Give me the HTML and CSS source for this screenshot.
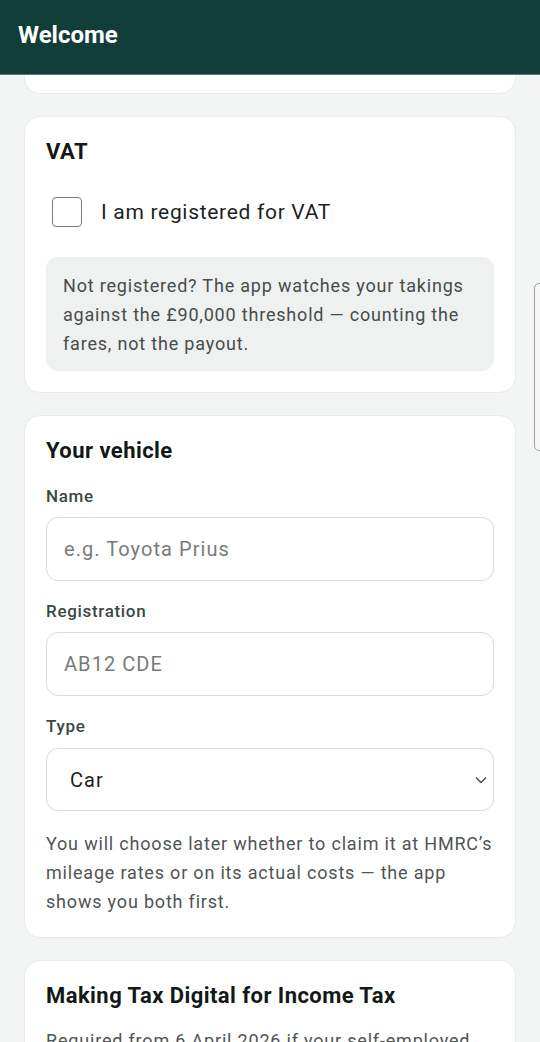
FILE: index.html
```html
<!DOCTYPE html>
<html lang="en">
<head>
<meta charset="utf-8">
<meta name="viewport" content="width=device-width, initial-scale=1">
<title>Welcome</title>
<link rel="stylesheet" href="styles.css">
</head>
<body>
<header class="topbar">
  <h1 class="topbar-title">Welcome</h1>
</header>
<main class="page">
  <section class="card card-intro" aria-hidden="true"></section>

  <section class="card">
    <h2 class="card-title">VAT</h2>
    <label class="check-row">
      <input type="checkbox" class="check-box">
      <span class="check-label">I am registered for VAT</span>
    </label>
    <div class="note">Not registered? The app watches your takings against the £90,000 threshold — counting the fares, not the payout.</div>
  </section>

  <section class="card">
    <h2 class="card-title">Your vehicle</h2>
    <div class="field">
      <label class="field-label" for="vname">Name</label>
      <input id="vname" class="text-input" type="text" placeholder="e.g. Toyota Prius">
    </div>
    <div class="field">
      <label class="field-label" for="vreg">Registration</label>
      <input id="vreg" class="text-input" type="text" placeholder="AB12 CDE">
    </div>
    <div class="field">
      <label class="field-label" for="vtype">Type</label>
      <div class="select-wrap">
        <select id="vtype" class="select-input">
          <option>Car</option>
          <option>Van</option>
          <option>Motorcycle</option>
        </select>
        <svg class="select-chevron" width="12" height="8" viewBox="0 0 12 8" aria-hidden="true"><path d="M1 1.5 L6 6.5 L11 1.5" fill="none" stroke="#444" stroke-width="1.3"/></svg>
      </div>
    </div>
    <p class="help">You will choose later whether to claim it at HMRC’s mileage rates or on its actual costs — the app shows you both first.</p>
  </section>

  <section class="card">
    <h2 class="card-title">Making Tax Digital for Income Tax</h2>
    <p class="help help-top">Required from 6 April 2026 if your self-employed income is over £50,000. The app keeps digital records and can send your quarterly updates.</p>
  </section>
</main>
<div class="edge-handle" aria-hidden="true"></div>
</body>
</html>
```
FILE: styles.css
```css
* { box-sizing: border-box; }

html, body {
  margin: 0;
  padding: 0;
}

body {
  background: #f3f5f4;
  font-family: Roboto, "Noto Sans", "Liberation Sans", sans-serif;
  color: #151b19;
}

.topbar {
  position: fixed;
  top: 0;
  left: 0;
  right: 0;
  height: 75px;
  background: #113e38;
  border-bottom: 1px solid #4f7f77;
  z-index: 10;
  display: flex;
  align-items: flex-start;
  padding: 19px 18px 0;
}

.topbar-title {
  margin: 0;
  font-size: 24px;
  line-height: 32px;
  font-weight: 700;
  color: #ffffff;
}

.page {
  padding: 0 24px 40px;
  display: flex;
  flex-direction: column;
  gap: 22px;
}

.card {
  background: #ffffff;
  border: 1px solid #e8ebea;
  border-radius: 16px;
  padding: 21px;
}

.card-intro {
  height: 94px;
  border-top-left-radius: 0;
  border-top-right-radius: 0;
}

.card-title {
  margin: 0;
  font-size: 22px;
  line-height: 28px;
  font-weight: 700;
  letter-spacing: 0.02em;
  color: #121917;
}

.check-row {
  display: flex;
  align-items: center;
  gap: 19px;
  height: 44px;
  margin-top: 24px;
  padding-left: 6px;
}

.check-box {
  appearance: none;
  -webkit-appearance: none;
  margin: 0;
  width: 30px;
  height: 30px;
  border: 1.5px solid #7a7a7a;
  border-radius: 4px;
  background: #ffffff;
  flex: none;
}

.check-label {
  font-size: 21px;
  letter-spacing: 0.033em;
  color: #1b1f1e;
}

.note {
  margin-top: 23px;
  background: #eef1f0;
  border-radius: 12px;
  padding: 14px 17px 13px;
  font-size: 18px;
  line-height: 29px;
  letter-spacing: 0.045em;
  color: #474c4b;
}

.field {
  display: flex;
  flex-direction: column;
  gap: 10px;
}

.card-title + .field {
  margin-top: 20px;
}

.field + .field {
  margin-top: 19px;
}

.field-label {
  font-size: 17px;
  line-height: 22px;
  font-weight: 500;
  letter-spacing: 0.04em;
  color: #3d4845;
}

.text-input,
.select-input {
  width: 100%;
  height: 64px;
  border: 1px solid #d9dddc;
  border-radius: 12px;
  background: #ffffff;
  font-family: inherit;
  font-size: 20px;
  letter-spacing: 0.053em;
  color: #1b1f1e;
  padding: 0 17px;
  outline: none;
}

.text-input::placeholder {
  color: #777b7a;
}

.select-wrap {
  position: relative;
  margin-top: 1px;
}

.select-input {
  appearance: none;
  -webkit-appearance: none;
  padding-left: 23px;
  height: 63px;
}

.select-chevron {
  position: absolute;
  right: 7px;
  top: 28px;
  pointer-events: none;
}

.help {
  margin: 18px 0 0;
  font-size: 18px;
  line-height: 29px;
  letter-spacing: 0.045em;
  color: #4f5554;
}

.help-top {
  margin-top: 16px;
}

.edge-handle {
  position: fixed;
  left: 534px;
  top: 283px;
  width: 20px;
  height: 168px;
  border: 1px solid #a3a3a3;
  border-radius: 5px;
  background: #f6f6f6;
  z-index: 20;
}
```
